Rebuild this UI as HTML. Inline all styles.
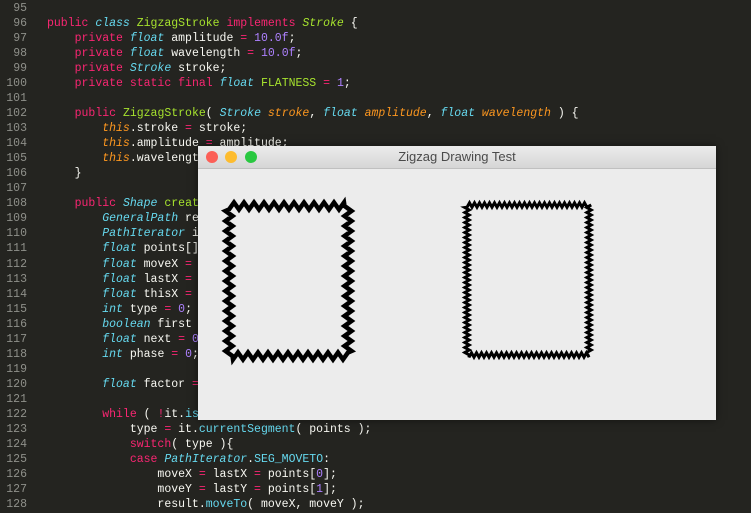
<!DOCTYPE html>
<html><head><meta charset="utf-8"><style>
html,body{margin:0;padding:0;width:751px;height:513px;overflow:hidden;background:#242420;}
#code{position:absolute;left:0;top:1px;font-family:"Liberation Mono",monospace;font-size:11.5px;color:#f8f8f2;}
.l{position:absolute;left:0;height:15px;line-height:15px;white-space:pre;width:751px;}
.n{position:absolute;left:0;width:27px;text-align:right;color:#8f908a;}
.c{position:absolute;left:47px;}
.k{color:#f92672}.t{color:#66d9ef;font-style:italic}.g{color:#a6e22e}.p{color:#ae81ff}.o{color:#fd971f;font-style:italic}.f{color:#66d9ef}
#win{position:absolute;left:198px;top:146px;width:518px;height:274px;background:#ececec;box-shadow:0 0 8px rgba(0,0,0,.5);}
#tb{position:absolute;left:0;top:0;width:518px;height:22px;background:linear-gradient(#ebebeb,#d6d6d6);border-bottom:1px solid #c0c0c0;font-family:"Liberation Sans",sans-serif;font-size:13px;color:#4a4a4a;text-align:center;line-height:22px;}
.d{position:absolute;top:5px;width:12px;height:12px;border-radius:50%;}
</style></head><body>
<div id="code"></div>
<div id="win"><div id="tb"><div class="d" style="left:8px;background:#fc5f57"></div><div class="d" style="left:27px;background:#fdbc2e"></div><div class="d" style="left:47px;background:#29c840"></div><span>Zigzag Drawing Test</span></div>
<svg width="518" height="252" style="position:absolute;left:0;top:22px" id="sv"></svg></div>
<script>
var L=[
[95,''],
[96,'<span class="k">public</span> <span class="t">class</span> <span class="g">ZigzagStroke</span> <span class="k">implements</span> <span class="g" style="font-style:italic">Stroke</span> {'],
[97,'    <span class="k">private</span> <span class="t">float</span> amplitude <span class="k">=</span> <span class="p">10.0f</span>;'],
[98,'    <span class="k">private</span> <span class="t">float</span> wavelength <span class="k">=</span> <span class="p">10.0f</span>;'],
[99,'    <span class="k">private</span> <span class="t">Stroke</span> stroke;'],
[100,'    <span class="k">private</span> <span class="k">static</span> <span class="k">final</span> <span class="t">float</span> <span class="g">FLATNESS</span> <span class="k">=</span> <span class="p">1</span>;'],
[101,''],
[102,'    <span class="k">public</span> <span class="g">ZigzagStroke</span>( <span class="t">Stroke</span> <span class="o">stroke</span>, <span class="t">float</span> <span class="o">amplitude</span>, <span class="t">float</span> <span class="o">wavelength</span> ) {'],
[103,'        <span class="o">this</span>.stroke <span class="k">=</span> stroke;'],
[104,'        <span class="o">this</span>.amplitude <span class="k">=</span> amplitude;'],
[105,'        <span class="o">this</span>.wavelength <span class="k">=</span> wavelength;'],
[106,'    }'],
[107,''],
[108,'    <span class="k">public</span> <span class="t">Shape</span> <span class="g">createStrokedShape</span>( <span class="t">Shape</span> <span class="o">shape</span> ) {'],
[109,'        <span class="t">GeneralPath</span> result <span class="k">=</span> <span class="k">new</span> <span class="f">GeneralPath</span>();'],
[110,'        <span class="t">PathIterator</span> it <span class="k">=</span> <span class="k">new</span> <span class="f">FlatteningPathIterator</span>( shape.<span class="f">getPathIterator</span>( <span class="p">null</span> ), <span class="k">FLATNESS</span> );'],
[111,'        <span class="t">float</span> points[] <span class="k">=</span> <span class="k">new</span> <span class="t">float</span>[<span class="p">6</span>];'],
[112,'        <span class="t">float</span> moveX <span class="k">=</span> <span class="p">0</span>, moveY <span class="k">=</span> <span class="p">0</span>;'],
[113,'        <span class="t">float</span> lastX <span class="k">=</span> <span class="p">0</span>, lastY <span class="k">=</span> <span class="p">0</span>;'],
[114,'        <span class="t">float</span> thisX <span class="k">=</span> <span class="p">0</span>, thisY <span class="k">=</span> <span class="p">0</span>;'],
[115,'        <span class="t">int</span> type <span class="k">=</span> <span class="p">0</span>;'],
[116,'        <span class="t">boolean</span> first <span class="k">=</span> <span class="p">false</span>;'],
[117,'        <span class="t">float</span> next <span class="k">=</span> <span class="p">0</span>;'],
[118,'        <span class="t">int</span> phase <span class="k">=</span> <span class="p">0</span>;'],
[119,''],
[120,'        <span class="t">float</span> factor <span class="k">=</span> <span class="p">1</span>;'],
[121,''],
[122,'        <span class="k">while</span> ( <span class="k">!</span>it.<span class="f">isDone</span>() ) {'],
[123,'            type <span class="k">=</span> it.<span class="f">currentSegment</span>( points );'],
[124,'            <span class="k">switch</span>( type ){'],
[125,'            <span class="k">case</span> <span class="t">PathIterator</span>.<span class="f">SEG_MOVETO</span>:'],
[126,'                moveX <span class="k">=</span> lastX <span class="k">=</span> points[<span class="p">0</span>];'],
[127,'                moveY <span class="k">=</span> lastY <span class="k">=</span> points[<span class="p">1</span>];'],
[128,'                result.<span class="f">moveTo</span>( moveX, moveY );']];
var h='';L.forEach(function(r,i){h+='<div class="l" style="top:'+(i*15.03).toFixed(2)+'px"><span class="n">'+r[0]+'</span><span class="c">'+r[1]+'</span></div>';});
document.getElementById('code').innerHTML=h;
function zz(x0,y0,x1,y1,per,amp){var pts=[];
 var c=[[x0,y0],[x1,y0],[x1,y1],[x0,y1],[x0,y0]];var s=0;
 for(var k=0;k<4;k++){var a=c[k],b=c[k+1],dx=b[0]-a[0],dy=b[1]-a[1],len=Math.hypot(dx,dy),ux=dx/len,uy=dy/len,nx=-uy,ny=ux;
  for(var d=0;d<len;d+=per/2){s++;var sg=(s%2?1:-1)*amp;pts.push((a[0]+ux*d+nx*sg).toFixed(1)+','+(a[1]+uy*d+ny*sg).toFixed(1));}}
 return 'M'+pts.join('L')+'Z';}
var ox=198,oy=168;
document.getElementById('sv').innerHTML=
'<path d="'+zz(229-ox,206-oy,348-ox,356-oy,10,3.5)+'" fill="none" stroke="#000" stroke-width="4.5"/>'+
'<path d="'+zz(467-ox,205-oy,589-ox,355-oy,5,2.2)+'" fill="none" stroke="#000" stroke-width="3"/>';
</script>
</body></html>
